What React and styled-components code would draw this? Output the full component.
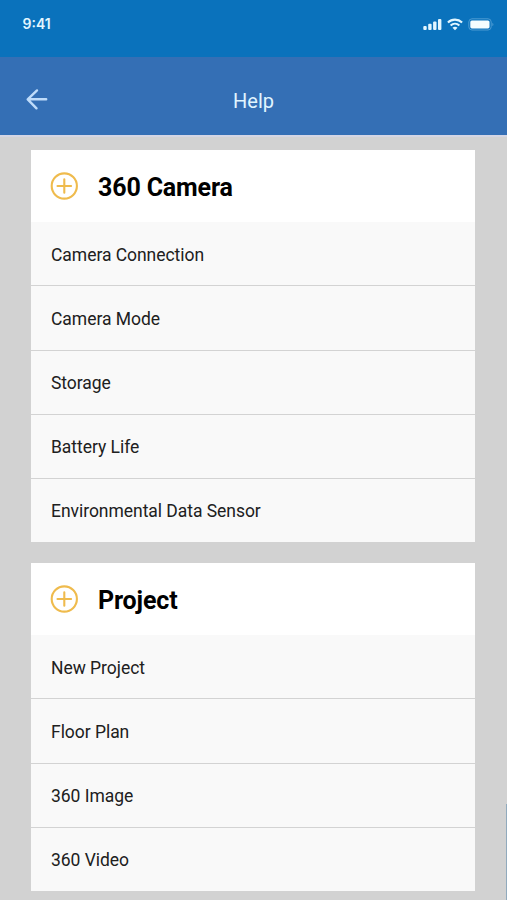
import React from 'react';
import styled, { createGlobalStyle } from 'styled-components';

const GlobalStyle = createGlobalStyle`
  * {
    box-sizing: border-box;
  }

  body {
    margin: 0;
    background: #d2d2d2;
    font-family: Roboto, sans-serif;
  }
`;

const Screen = styled.div`
  position: relative;
  width: 100%;
  height: 900px;
  overflow: hidden;
  background: #d2d2d2;
`;

const StatusBar = styled.div`
  display: flex;
  justify-content: space-between;
  height: 57px;
  padding: 14px 13px 0 22.5px;
  background: #0a72bc;
`;

const Time = styled.span`
  color: #e2f6ff;
  font-family: Inter, sans-serif;
  font-size: 14px;
  font-weight: 600;
  line-height: 19px;
`;

const StatusIcons = styled.div`
  display: flex;
  align-items: flex-start;
  gap: 5px;
  padding-top: 4px;
`;

const Header = styled.header`
  display: grid;
  grid-template-columns: 1fr auto 1fr;
  align-items: center;
  height: 80px;
  padding: 11px 25px 0;
  background: #346fb5;
  border-bottom: 2px solid #d4d6e4;
`;

const BackButton = styled.button`
  display: flex;
  width: 24px;
  padding: 0;
  margin-top: -5px;
  border: 0;
  background: none;
`;

const Title = styled.h1`
  margin: 0;
  color: #e0f5ff;
  font-size: 20px;
  font-weight: 400;
  line-height: 25px;
`;

const Content = styled.main`
  display: flex;
  flex-direction: column;
  gap: 20.5px;
  padding: 13px 32px 0 31px;
`;

const Card = styled.section`
  background: #fff;
`;

const CardHead = styled.div`
  display: flex;
  align-items: center;
  gap: 20px;
  height: 72.3px;
  padding: 4px 19px 0;

  svg {
    margin-top: -4px;
  }
`;

const CardTitle = styled.h2`
  margin: 0;
  color: #000;
  font-size: 25px;
  font-weight: 700;
  line-height: 30px;
  letter-spacing: -0.15px;
`;

const List = styled.ul`
  margin: 0;
  padding: 0;
  list-style: none;
`;

const Row = styled.li`
  display: flex;
  align-items: center;
  height: 64.2px;
  padding: 2px 20px 0;
  background: #f9f9f9;
  color: #202020;
  font-size: 17.5px;
  letter-spacing: -0.04px;
  border-bottom: 1.5px solid #d3d3d3;

  &:last-child {
    height: 63.4px;
    padding-top: 1px;
    border-bottom: 0;
  }
`;

const EdgeStrip = styled.div`
  position: absolute;
  right: 0;
  bottom: 0;
  width: 1px;
  height: 96px;
  background: #91aabd;
`;

const sections = [
	{
		title: '360 Camera',
		items: ['Camera Connection', 'Camera Mode', 'Storage', 'Battery Life', 'Environmental Data Sensor'],
	},
	{
		title: 'Project',
		items: ['New Project', 'Floor Plan', '360 Image', '360 Video'],
	},
];

function SignalIcon() {
	return (
		<svg width="19" height="13" viewBox="0 0 19 13" fill="#e2f6ff">
			<rect x="0.3" y="8" width="3.4" height="4" rx="1" />
			<rect x="5.2" y="5.8" width="3.4" height="6.2" rx="1" />
			<rect x="10.1" y="3.4" width="3.4" height="8.6" rx="1" />
			<rect x="15" y="1" width="3.4" height="11" rx="1" />
		</svg>
	)
}

function WifiIcon() {
	return (
		<svg width="16" height="13" viewBox="0 0 16 13" fill="none" stroke="#e2f6ff" strokeWidth="2.1">
			<path d="M0.9 4.5C4.9 0.7 11.1 0.7 15.1 4.5" />
			<path d="M3.6 7.4C6.1 5.1 9.9 5.1 12.4 7.4" />
			<path d="M8 12.2L5.5 9.7C6.9 8.4 9.1 8.4 10.5 9.7Z" fill="#e2f6ff" stroke="none" />
		</svg>
	)
}

function BatteryIcon() {
	return (
		<svg width="26" height="13" viewBox="0 0 26 13">
			<rect x="0.8" y="0.8" width="22.4" height="11.2" rx="3.2" fill="none" stroke="#4a9ad2" strokeWidth="1" />
			<rect x="2.3" y="2.4" width="19.2" height="8" rx="1.6" fill="#f4fdff" />
			<path d="M24.3 4.7C25.8 5.3 25.8 7.5 24.3 8.1Z" fill="#4a9ad2" />
		</svg>
	)
}

function BackIcon() {
	return (
		<svg width="24" height="24" viewBox="0 0 24 24" fill="none" stroke="#bfdcfa" strokeWidth="2.4" strokeLinecap="round" strokeLinejoin="round">
			<path d="M21.2 12.3H3M12 3.4L2.7 12.3L11.5 21.3" />
		</svg>
	)
}

function PlusIcon() {
	return (
		<svg width="28" height="28" viewBox="0 0 28 28" fill="none" stroke="#efbb4d" strokeWidth="2.1" strokeLinecap="round">
			<circle cx="14.3" cy="14" r="12.6" />
			<path d="M14.3 7.2V20.8M7.5 14H21.1" />
		</svg>
	)
}

function App() {
	return (
		<>
			<GlobalStyle />
			<Screen>
				<StatusBar>
					<Time>9:41</Time>
					<StatusIcons>
						<SignalIcon />
						<WifiIcon />
						<BatteryIcon />
					</StatusIcons>
				</StatusBar>
				<Header>
					<BackButton aria-label="Back">
						<BackIcon />
					</BackButton>
					<Title>Help</Title>
				</Header>
				<Content>
					{sections.map((section) => (
						<Card key={section.title}>
							<CardHead>
								<PlusIcon />
								<CardTitle>{section.title}</CardTitle>
							</CardHead>
							<List>
								{section.items.map((item) => (
									<Row key={item}>{item}</Row>
								))}
							</List>
						</Card>
					))}
				</Content>
				<EdgeStrip />
			</Screen>
		</>
	)
}

export default App
